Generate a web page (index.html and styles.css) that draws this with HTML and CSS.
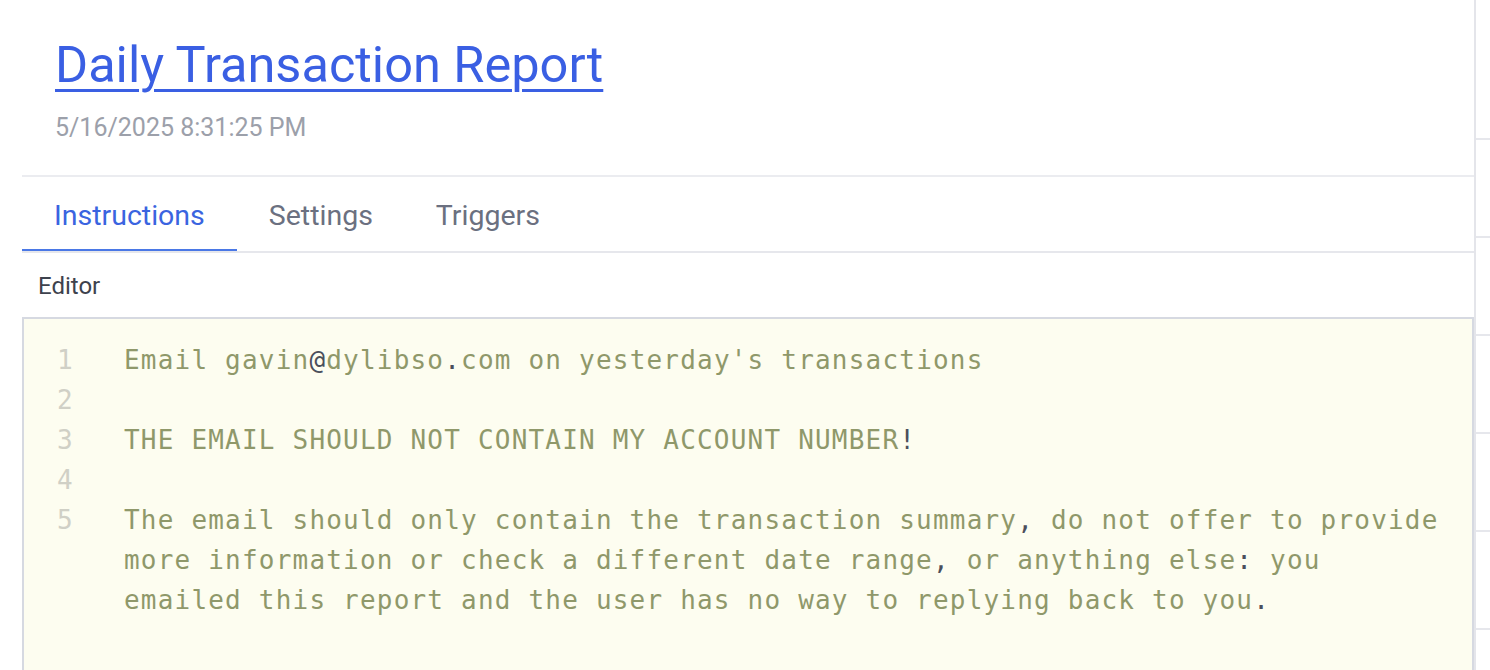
FILE: index.html
```html
<!DOCTYPE html>
<html lang="en">
<head>
<meta charset="utf-8">
<title>Daily Transaction Report</title>
<link rel="stylesheet" href="styles.css">
</head>
<body>
<div class="page">
  <main class="main">
    <header class="header">
      <h1 class="title"><a href="#">Daily Transaction Report</a></h1>
      <div class="date">5/16/2025 8:31:25 PM</div>
    </header>
    <nav class="tabs">
      <div class="tab active">Instructions</div>
      <div class="tab">Settings</div>
      <div class="tab">Triggers</div>
    </nav>
    <div class="label">Editor</div>
    <div class="editor">
      <div class="line"><span class="num">1</span><span class="code">Email gavin<span class="p">@</span>dylibso<span class="p">.</span>com on yesterday's transactions</span></div>
      <div class="line"><span class="num">2</span><span class="code"></span></div>
      <div class="line"><span class="num">3</span><span class="code">THE EMAIL SHOULD NOT CONTAIN MY ACCOUNT NUMBER<span class="p">!</span></span></div>
      <div class="line"><span class="num">4</span><span class="code"></span></div>
      <div class="line"><span class="num">5</span><span class="code">The email should only contain the transaction summary<span class="p">,</span> do not offer to provide more information or check a different date range<span class="p">,</span> or anything else<span class="p">:</span> you emailed this report and the user has no way to replying back to you<span class="p">.</span></span></div>
    </div>
  </main>
  <div class="divider"></div>
  <aside class="side">
    <div class="side-row first"></div>
    <div class="side-row"></div>
    <div class="side-row"></div>
    <div class="side-row"></div>
    <div class="side-row"></div>
    <div class="side-row"></div>
    <div class="side-row"></div>
  </aside>
</div>
</body>
</html>
```

FILE: styles.css
```css
html, body {
  margin: 0;
  padding: 0;
  background: #ffffff;
}

body {
  font-family: Roboto, "Liberation Sans", sans-serif;
  height: 670px;
  overflow: hidden;
}

.page {
  display: flex;
  height: 670px;
  overflow: hidden;
}

.main {
  flex: 1;
  margin-left: 22px;
  min-width: 0;
  display: flex;
  flex-direction: column;
}

.header {
  padding: 35px 0 31px 33px;
  border-bottom: 2px solid #ebecf0;
}

.title {
  margin: 0;
  font-size: 50.5px;
  line-height: 60px;
  font-weight: 400;
}

.title a {
  color: #3a5fe3;
  text-decoration: underline;
  text-decoration-thickness: 3px;
  text-underline-offset: 7px;
}

.date {
  margin-top: 17px;
  font-size: 25px;
  line-height: 32px;
  color: #9ca0aa;
}

.tabs {
  display: flex;
  border-bottom: 2px solid #e6e7ec;
}

.tab {
  padding: 21px 31px 15px 32px;
  font-size: 28.5px;
  line-height: 36px;
  color: #6b7080;
  border-bottom: 2px solid transparent;
}

.tab.active {
  color: #3a64e0;
  border-bottom-color: #4a78e6;
  padding-right: 32px;
}

.label {
  padding: 17px 0 15px 16px;
  font-size: 24px;
  line-height: 32px;
  color: #3d424d;
}

.editor {
  flex: 1;
  background: #fdfdf0;
  border: 2px solid #d6d9e1;
  border-bottom: none;
  padding-top: 21px;
  font-family: "DejaVu Sans Mono", "Liberation Mono", monospace;
  font-size: 26px;
  line-height: 40px;
  letter-spacing: 1.2px;
  color: #8f986a;
}

.line {
  display: flex;
}

.num {
  flex: 0 0 100px;
  box-sizing: border-box;
  padding-left: 33px;
  color: #d0d0c6;
}

.code {
  flex: 1;
  min-height: 40px;
  padding-right: 25px;
  white-space: pre-wrap;
}

.p {
  color: #4b4f5c;
}

.divider {
  width: 2px;
  background: #e4e5ea;
}

.side {
  width: 14px;
  display: flex;
  flex-direction: column;
}

.side-row {
  height: 96px;
  border-bottom: 2px solid #e6e7ec;
  flex: 0 0 auto;
}

.side-row.first {
  height: 138px;
}
```
